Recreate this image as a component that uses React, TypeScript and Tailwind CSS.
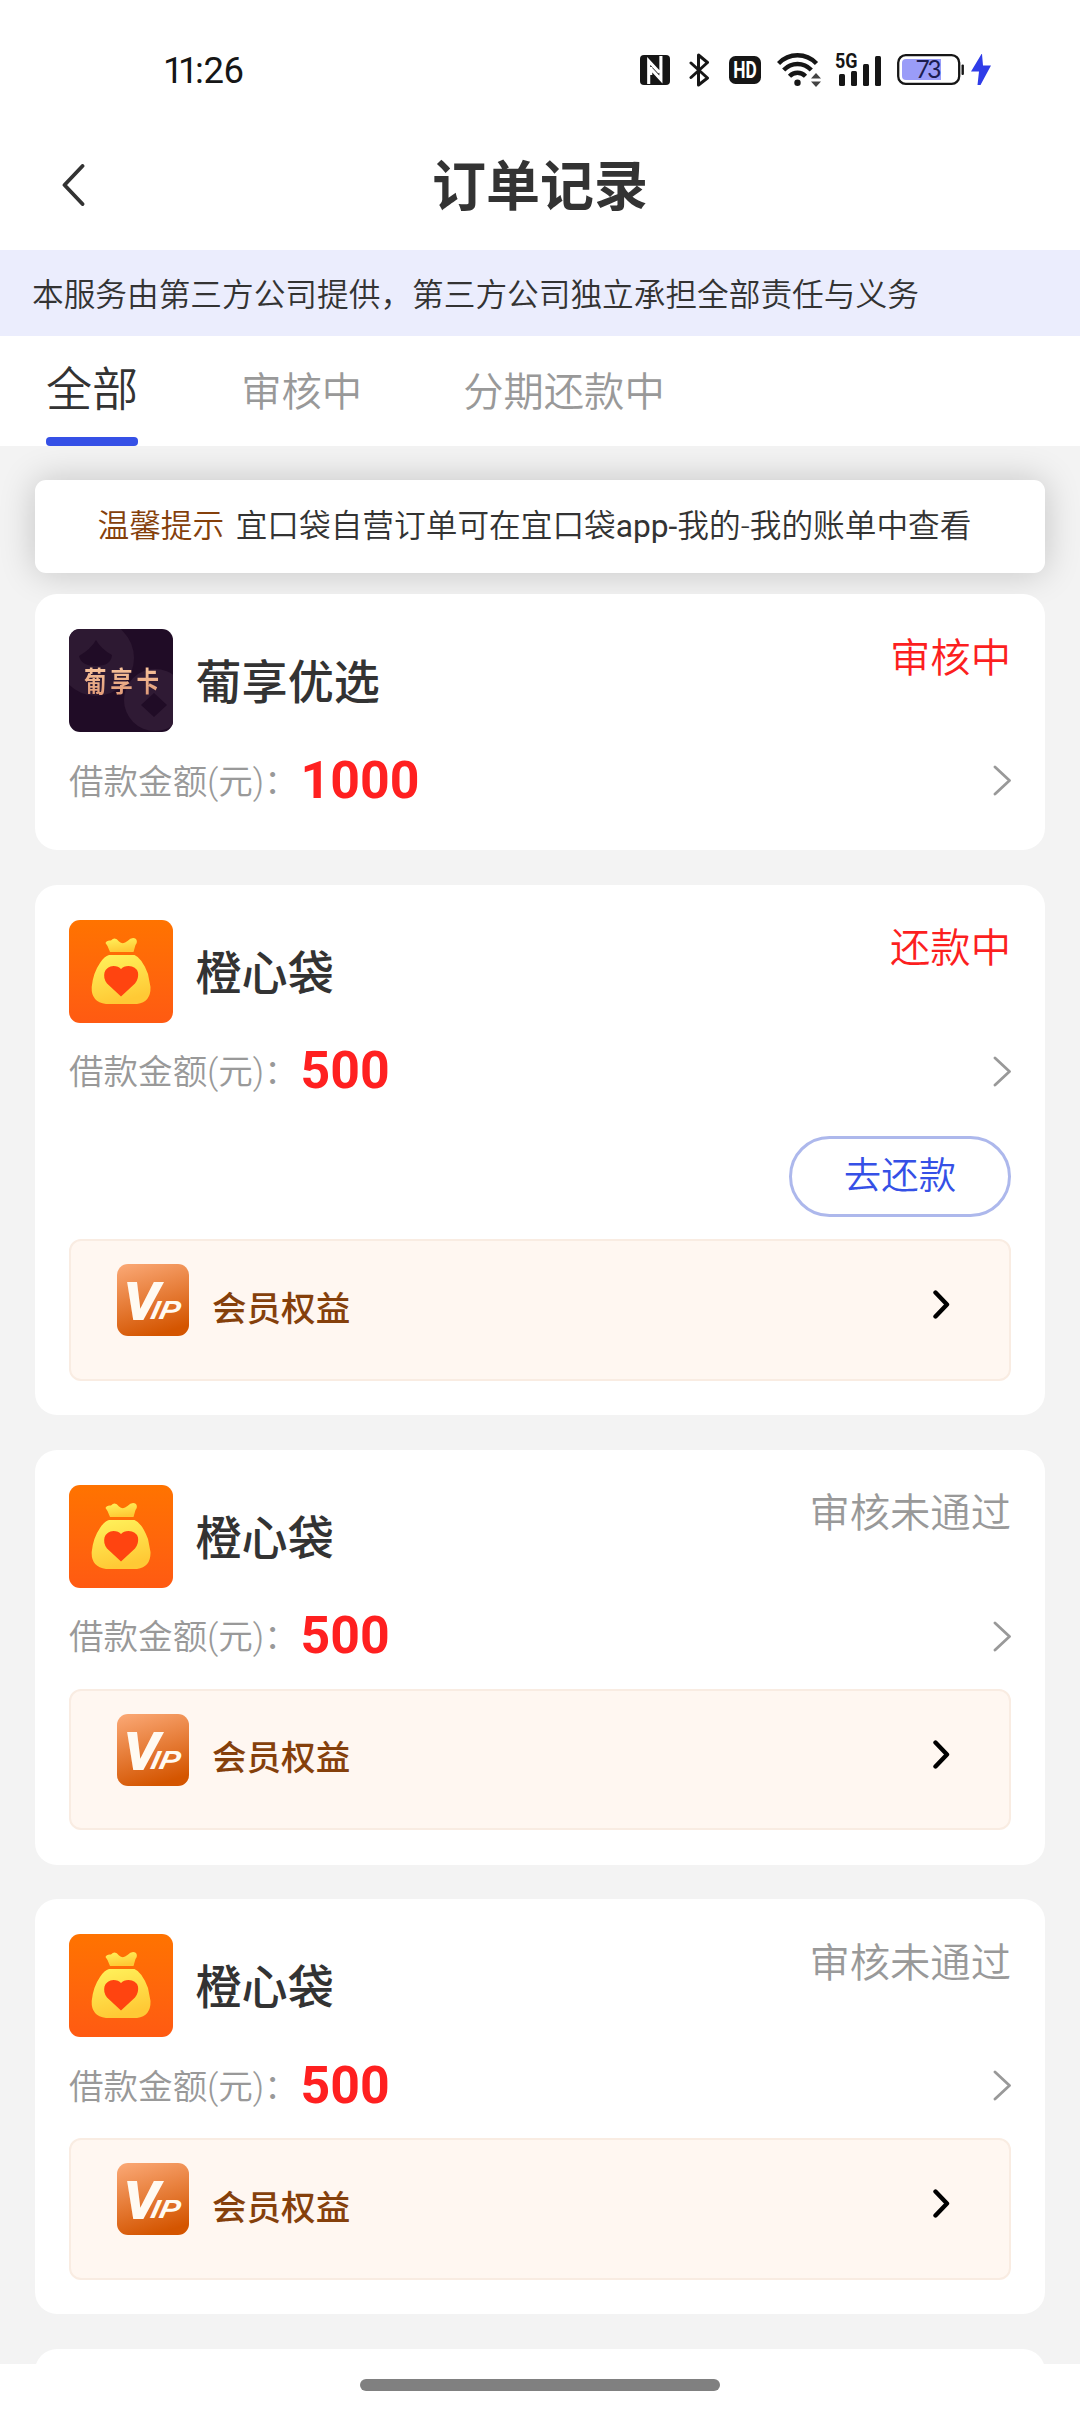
import React from "react";

type Order = {
  name: string;
  logo: "grape" | "bag";
  amount: string;
  status: string;
  active: boolean;
  repay?: boolean;
  vip?: boolean;
};

const orders: Order[] = [
  { name: "葡享优选", logo: "grape", amount: "1000", status: "审核中", active: true },
  { name: "橙心袋", logo: "bag", amount: "500", status: "还款中", active: true, repay: true, vip: true },
  { name: "橙心袋", logo: "bag", amount: "500", status: "审核未通过", active: false, vip: true },
  { name: "橙心袋", logo: "bag", amount: "500", status: "审核未通过", active: false, vip: true },
];

function StatusBar() {
  return (
    <div className="flex h-[120px] shrink-0 items-center pt-[19px] pr-[89px] pl-[163px] font-normal text-[#161616]">
      <div className="mt-[3px] flex text-[36.5px] leading-[44px]">
        <span className="tracking-[-5.5px]">11</span>
        <span className="ml-[2px] tracking-[-0.4px]">:26</span>
      </div>
      <div className="ml-auto flex items-center">
        <svg width="30" height="30" viewBox="0 0 30 30">
          <rect width="30" height="30" rx="4" fill="#161616" />
          <path d="M8.700 29V6L19.500 17.500M10.700 12V20M20.900 1V24.500L10.700 13.500" fill="none" stroke="#fff" strokeWidth="3.1" />
        </svg>
        <svg className="ml-[19px]" width="21" height="34" viewBox="0 0 21 34" fill="none" stroke="#161616" strokeWidth="3" strokeLinejoin="round" strokeLinecap="round">
          <path d="M2 10L18.500 25L9.500 32V2L18.500 9.500L2 24.500" />
        </svg>
        <svg className="ml-[19px]" width="32" height="28" viewBox="0 0 32 28">
          <rect width="32" height="28" rx="6.5" fill="#161616" />
          <text x="4.3" y="22.3" fontFamily="Roboto" fontWeight="700" fontSize="23.5" fill="#fff" textLength="23.5" lengthAdjust="spacingAndGlyphs">HD</text>
        </svg>
        <svg className="ml-[16px]" width="45" height="34" viewBox="0 0 45 34" fill="none" stroke="#161616" strokeWidth="4.4">
          <path d="M1.500 10.500C12 -0.500 29 -0.500 39.500 10.500" />
          <path d="M6.700 17C14.500 9 26.500 9 34.300 17" />
          <path d="M12.500 23.200C17 18.500 24 18.500 28.500 23.200" />
          <circle cx="20.500" cy="29.800" r="3.200" fill="#161616" stroke="none" />
          <path d="M34 25.500L39 20L44 25.500ZM34 28.500L39 34L44 28.500Z" fill="#444" stroke="none" />
        </svg>
        <svg className="ml-[13px] overflow-visible" width="47" height="33" viewBox="0 0 47 33">
          <text x="0" y="15" fontFamily="Roboto" fontWeight="700" fontSize="20.5" fill="#161616" textLength="22.5" lengthAdjust="spacingAndGlyphs">5G</text>
          <g fill="#161616">
            <rect x="4" y="21" width="6" height="12" rx="1.5" />
            <rect x="16" y="18" width="6" height="15" rx="1.5" />
            <rect x="28" y="11" width="6" height="22" rx="1.5" />
            <rect x="40" y="3" width="6" height="30" rx="1.5" />
          </g>
        </svg>
        <svg className="ml-[15px]" width="68" height="31" viewBox="0 0 68 31">
          <rect x="1.2" y="1.2" width="61" height="28.6" rx="7.5" fill="#fff" stroke="#161616" strokeWidth="2.3" />
          <path d="M9 5H44V26H9Q5 26 5 22V9Q5 5 9 5Z" fill="#9a9cf8" />
          <rect x="64.5" y="10.5" width="2.4" height="10.5" rx="1" fill="#161616" />
          <text x="18.5" y="24.3" fontFamily="Lato" fontSize="24.5" fill="#1c1c50" textLength="26">73</text>
        </svg>
        <svg className="ml-[6px]" width="20" height="31" viewBox="0 0 20 31">
          <path d="M10.500 0L0 17.500H8L6.500 31H9.500L20 11.500H12L11 0Z" fill="#2f3ce8" />
        </svg>
      </div>
    </div>
  );
}

function GrapeLogo() {
  return (
    <div className="relative h-[103px] w-[104px] shrink-0 overflow-hidden rounded-[11px] bg-[#200c26]">
      <svg className="block" width="104" height="103" viewBox="0 0 104 103">
        <circle cx="27" cy="29" r="38" fill="#2d1932" />
        <path d="M27 11Q32 20 43 26Q42 37 27 37Q12 37 10 27Q22 20 27 11Z" fill="#200c26" />
        <circle cx="86" cy="71" r="31" fill="#2f1a34" />
        <path d="M85 64L98 76L85 88L72 76Z" fill="#200c26" />
      </svg>
      <div className="absolute top-[38px] left-[15px] flex w-[75px] scale-y-125 justify-between bg-gradient-to-b from-[#fbc9a0] to-[#dc9372] bg-clip-text text-[22.5px] leading-[30px] font-bold text-transparent">
        <span>葡</span>
        <span>享</span>
        <span>卡</span>
      </div>
    </div>
  );
}

function BagLogo() {
  return (
    <div className="h-[103px] w-[104px] shrink-0 overflow-hidden rounded-[11px] bg-gradient-to-b from-[#ff7300] to-[#ff5a12]">
      <svg className="block" width="104" height="103" viewBox="0 0 104 103">
        <defs>
          <linearGradient id="sack" x1="0" y1="0" x2="0.3" y2="1">
            <stop offset="0" stopColor="#fff35c" />
            <stop offset="1" stopColor="#ffc935" />
          </linearGradient>
        </defs>
        <path d="M36.500 23Q37.500 20 42 20.500Q46 16 50 21.500Q54 25 58.500 21Q63 16.500 67 19Q69 22 66.500 25L64.500 32H41L38.500 26Z" fill="url(#sack)" />
        <path d="M40 35H65.500Q73 38 79 54L81.500 67Q82 82 68 84H37Q22 82 22.700 67Q24 53 31 43Q35.500 36 40 35Z" fill="url(#sack)" />
        <path d="M52 76.500L38 63.500Q34 58.500 35.500 52.500Q38 46 44.500 46Q49.500 46 52 49Q54.500 46 59.500 46Q67 46 69 52.500Q70 58.500 66 63.500Z" fill="#ff4410" />
      </svg>
    </div>
  );
}

function VipPanel() {
  return (
    <div className="flex h-[141.200px] items-start rounded-[12px] border-2 border-[#f9ece2] bg-[#fff7f1] pt-[23px] pl-[46px]">
      <svg width="72" height="72" viewBox="0 0 72 72">
        <defs>
          <linearGradient id="vip" x1="0.2" y1="0" x2="0.5" y2="1">
            <stop offset="0" stopColor="#f9a571" />
            <stop offset="1" stopColor="#d45500" />
          </linearGradient>
        </defs>
        <rect width="72" height="72" rx="11" fill="url(#vip)" />
        <g fontFamily="Liberation Sans" fontWeight="700" fontStyle="italic" fill="#fffaf2">
          <text x="7" y="54.500" fontSize="52" stroke="#fffaf2" strokeWidth="2">V</text>
          <text transform="translate(32.500 55) skewX(-12)" fontSize="26" textLength="29" lengthAdjust="spacingAndGlyphs">IP</text>
        </g>
      </svg>
      <span className="mt-[20.500px] ml-[23px] text-[34.56px] leading-[48px] font-medium text-[#85400b]">会员权益</span>
      <svg className="mt-[26px] mr-[59px] ml-auto" width="17" height="29" viewBox="0 0 17 29" fill="none" stroke="#000" strokeWidth="4.4" strokeLinecap="round" strokeLinejoin="round">
        <path d="M2.500 2.500L14 14.500L2.500 26.500" />
      </svg>
    </div>
  );
}

function OrderCard({ order }: { order: Order }) {
  return (
    <div className="shrink-0 rounded-[22px] bg-white px-[34px] pt-[34.560px]">
      <div className="flex h-[103.680px] items-center">
        {order.logo === "grape" ? <GrapeLogo /> : <BagLogo />}
        <span className="mt-[5px] ml-[22.500px] text-[46.08px] leading-[64px] font-medium text-[#333]">{order.name}</span>
        {order.active ? (
          <span className="ml-auto self-start pt-[2px] text-[40.32px] leading-[56px] text-[#fc1f1f]">{order.status}</span>
        ) : (
          <span className="ml-auto self-start pt-[2px] text-[40.32px] leading-[56px] text-[#999]">{order.status}</span>
        )}
      </div>
      <div className="flex h-[96px] items-center">
        <span className="mt-[3px] text-[34.56px] leading-[48px] text-[#999]">借款金额(元)：</span>
        <span className="mt-[1px] ml-[2px] text-[51.84px] leading-[60px] font-bold text-[#ff2020]">{order.amount}</span>
        <svg className="mt-[1px] ml-auto" width="18" height="31" viewBox="0 0 18 31" fill="none" stroke="#999" strokeWidth="2.8" strokeLinecap="round" strokeLinejoin="round">
          <path d="M2 2L16.500 15.500L2 29" />
        </svg>
      </div>
      {order.repay && (
        <div className="mt-[17px] mb-[17.500px] flex justify-end">
          <button className="h-[81px] w-[222px] rounded-full border-3 border-[#adb8ec] pb-[1px] text-[37.44px] leading-[52px] text-[#3550e6]">去还款</button>
        </div>
      )}
      {order.vip ? (
        <div className="pt-[5px] pb-[34.500px]">
          <VipPanel />
        </div>
      ) : (
        <div className="h-[22px]" />
      )}
    </div>
  );
}

export default function App() {
  return (
    <div className="flex h-[2412px] w-[1080px] flex-col overflow-hidden bg-white font-[Roboto,'Noto_Sans_CJK_SC',sans-serif] font-[350]">
      <StatusBar />
      <header className="grid h-[130px] shrink-0 grid-cols-[1fr_auto_1fr] items-center px-[62px]">
        <svg width="23" height="42" viewBox="0 0 23 42" fill="none" stroke="#333" strokeWidth="3.8" strokeLinecap="round" strokeLinejoin="round">
          <path d="M20.500 2L2.500 21L20.500 40" />
        </svg>
        <h1 className="pt-[6px] text-[54px] leading-[76px] font-bold text-[#333]">订单记录</h1>
      </header>
      <div className="flex h-[86px] shrink-0 items-center bg-[#ebedfd] pt-[5px] pl-[32px] text-[31.68px] leading-[44px] text-[#333]">
        本服务由第三方公司提供，第三方公司独立承担全部责任与义务
      </div>
      <nav className="flex h-[110px] shrink-0 pl-[46px] leading-[64px] whitespace-nowrap text-[#999]">
        <div className="flex w-[92.200px] flex-col justify-between pt-[22px] text-[46.08px] text-[#333]">
          <span>全部</span>
          <div className="h-[9px] rounded-[4px] bg-[#3550e6]" />
        </div>
        <span className="ml-[103px] pt-[25px] text-[40.32px]">审核中</span>
        <span className="ml-[101px] pt-[25px] text-[40.32px]">分期还款中</span>
      </nav>
      <main className="flex min-h-0 flex-1 flex-col overflow-hidden bg-[#f3f3f3] px-[35px] pt-[34px]">
        <div className="flex h-[93px] shrink-0 items-center rounded-[11px] bg-white pl-[62.500px] text-[31.68px] leading-[44px] text-[#333] shadow-[0_0_36px_rgba(0,0,0,0.2)]">
          <span className="mr-[11.500px] text-[#85400b]">温馨提示</span>
          <span>
            宜口袋自营订单可在宜口袋<span className="font-normal">app-</span>我的-我的账单中查看
          </span>
        </div>
        <div className="relative mt-[21px] flex flex-col gap-[34.560px]">
          {orders.map((order, i) => (
            <OrderCard key={i} order={order} />
          ))}
          <div className="h-[256px] shrink-0 rounded-[22px] bg-white" />
        </div>
      </main>
      <div className="flex h-[48px] shrink-0 justify-center bg-white pt-[15px]">
        <div className="h-[12px] w-[360px] rounded-full bg-[#808080]" />
      </div>
    </div>
  );
}
